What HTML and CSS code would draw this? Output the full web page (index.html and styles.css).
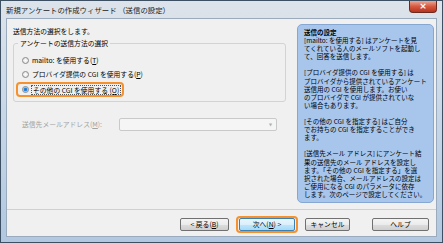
FILE: index.html
```html
<!DOCTYPE html>
<html>
  <head>
    <meta charset="utf-8">
    <title>
      新規アンケートの作成ウィザード
    </title>
    <link rel="stylesheet" href="styles.css">
  </head>

  <body>

    <div class="window">
      <div class="title-bar">
        <span class="title-text">新規アンケートの作成ウィザード （送信の設定）</span>
        <span class="close-button">×</span>
      </div>

      <div class="client">
        <div class="main">
          <div class="left-column">
            <p class="intro">送信方法の選択をします。</p>

            <fieldset class="group-box">
              <legend>アンケートの送信方法の選択</legend>
              <div class="radio-row">
                <span class="radio"></span>
                <span>mailto: を使用する(<u>T</u>)</span>
              </div>
              <div class="radio-row">
                <span class="radio"></span>
                <span>プロバイダ提供の CGI を使用する(<u>P</u>)</span>
              </div>
              <div class="radio-row selected-row">
                <span class="radio checked"></span>
                <span class="focus-label">その他の CGI を使用する (<u>O</u>)</span>
              </div>
            </fieldset>

            <div class="address-row">
              <span class="address-label">送信先メールアドレス(<u>M</u>):</span>
              <div class="combo">
                <span class="combo-arrow">▼</span>
              </div>
            </div>
          </div>

          <div class="help-panel">
            <p class="panel-title">送信の設定</p>
            <p class="panel-text">[mailto: を使用する] はアンケートを見<br>てくれている人のメールソフトを起動し<br>て、回答を送信します。</p>
            <p class="panel-text">[プロバイダ提供の CGI を使用する] は<br>プロバイダから提供されているアンケート<br>送信用の CGI を使用します。お使い<br>のプロバイダで CGI が提供されていな<br>い場合もあります。</p>
            <p class="panel-text">[その他の CGI を指定する] はご自分<br>でお持ちの CGI を指定することができ<br>ます。</p>
            <p class="panel-text">[送信先メール アドレス] にアンケート結<br>果の送信先のメール アドレスを設定し<br>ます。「その他の CGI を指定する」を選<br>択された場合、メールアドレスの設定は<br>ご使用になる CGI のパラメータに依存<br>します。次のページで設定してください。</p>
          </div>
        </div>

        <div class="separator"></div>

        <div class="button-row">
          <button class="back-button">&lt; 戻る(<u>B</u>)</button>
          <div class="next-wrap">
            <button class="next-button">次へ(<u>N</u>) &gt;</button>
          </div>
          <button class="cancel-button">キャンセル</button>
          <button class="help-button">ヘルプ</button>
        </div>
      </div>
    </div>

  </body>

</html>
```

FILE: styles.css
```css
body{
  margin: 0;
  font-family: "Noto Sans CJK JP", sans-serif;
}
p{
  margin: 0;
}
.window{
  width: 443px;
  height: 243px;
  box-sizing: border-box;
  border: 1px solid #3d4f63;
  padding: 0 5px 5px 5px;
  background: linear-gradient(#dde3ea, #c4d5e7 55%, #b1c8e0);
  display: flex;
  flex-direction: column;
}
.title-bar{
  height: 17px;
  display: flex;
  justify-content: space-between;
  align-items: flex-start;
}
.title-text{
  font-size: 7.4px;
  line-height: 17px;
  color: #1a1a1a;
}
.close-button{
  width: 28px;
  height: 12px;
  box-sizing: border-box;
  border: 1px solid #6b2a20;
  border-top: none;
  border-radius: 0 0 4px 4px;
  background: linear-gradient(#eaa896, #d4593f 50%, #b9321d);
  color: white;
  font-family: "DejaVu Sans", sans-serif;
  font-size: 9px;
  font-weight: bold;
  line-height: 11px;
  text-align: center;
}
.client{
  flex: 1;
  background-color: #f0f0f0;
  border: 1px solid #9aabbd;
  display: flex;
  flex-direction: column;
}
.main{
  flex: 1;
  display: flex;
  padding-top: 5px;
}
.left-column{
  width: 273px;
  margin-left: 6px;
  padding-top: 3px;
  font-size: 6.8px;
  line-height: 9px;
}
.group-box{
  margin: 3px 0 0 0;
  padding: 5px 0 4px 8px;
  border: 1px solid #d3d3d3;
  border-radius: 3px;
}
.group-box legend{
  padding: 0 2px;
  margin-left: -4px;
}
.radio-row{
  display: flex;
  align-items: center;
  gap: 3px;
  height: 14px;
}
.radio{
  width: 7px;
  height: 7px;
  box-sizing: border-box;
  border: 1px solid #8a8a8a;
  border-radius: 50%;
  background: radial-gradient(circle, #ffffff, #dcdcdc);
}
.radio.checked{
  background: radial-gradient(circle, #1f6fc4 0, #2f86d8 1.4px, #a8d4f4 2.2px, #eeeeee 2.8px);
}
.selected-row{
  width: fit-content;
  height: 15px;
  box-sizing: border-box;
  margin-top: 1px;
  margin-left: -6px;
  padding: 0 2px 0 4px;
  border: 2px solid #f5922f;
  border-radius: 4px;
}
.focus-label{
  outline: 1px dotted #555555;
  padding: 0 1px;
  line-height: 8px;
}
.address-row{
  display: flex;
  align-items: center;
  margin-top: 16px;
  padding-left: 9px;
}
.address-label{
  width: 97px;
  color: #a2a2a2;
}
.combo{
  width: 158px;
  height: 13px;
  box-sizing: border-box;
  border: 1px solid #c9c9c9;
  border-radius: 2px;
  background-color: #f5f5f5;
  display: flex;
  justify-content: flex-end;
  align-items: center;
  padding-right: 4px;
}
.combo-arrow{
  font-family: "DejaVu Sans", sans-serif;
  font-size: 4px;
  color: #b0b0b0;
}
.help-panel{
  width: 137px;
  height: 179px;
  box-sizing: border-box;
  margin-left: 11px;
  padding: 3px 0 0 6px;
  background-color: #a8c6ec;
  border: 1px solid #86a7d2;
  border-radius: 5px;
  font-size: 6.5px;
  line-height: 8.1px;
  white-space: nowrap;
  color: black;
}
.panel-title{
  font-weight: bold;
}
.panel-text{
  margin-bottom: 8.1px;
}
.separator{
  border-top: 1px solid #d0d0d0;
}
.button-row{
  display: flex;
  justify-content: flex-end;
  align-items: center;
  padding: 6px 7px 3px 0;
}
button{
  height: 13px;
  box-sizing: border-box;
  padding: 0;
  border: 1px solid #707070;
  border-radius: 2px;
  background: linear-gradient(#f4f4f4, #ebebeb 50%, #dddddd 50%, #cfcfcf);
  color: black;
  font-family: "Noto Sans CJK JP", sans-serif;
  font-size: 6.8px;
  line-height: 11px;
}
.back-button{
  width: 49px;
}
.next-wrap{
  display: flex;
  margin-left: 7px;
  padding: 0 1px;
  border: 2px solid #f5922f;
  border-radius: 4px;
}
.next-button{
  width: 56px;
  border-color: #3c7fb1;
  background: linear-gradient(#eaf6fd, #d9f0fc 50%, #bee6fd 50%, #a7d9f5);
}
.cancel-button{
  width: 45px;
  margin-left: 7px;
}
.help-button{
  width: 57px;
  margin-left: 22px;
}
```
